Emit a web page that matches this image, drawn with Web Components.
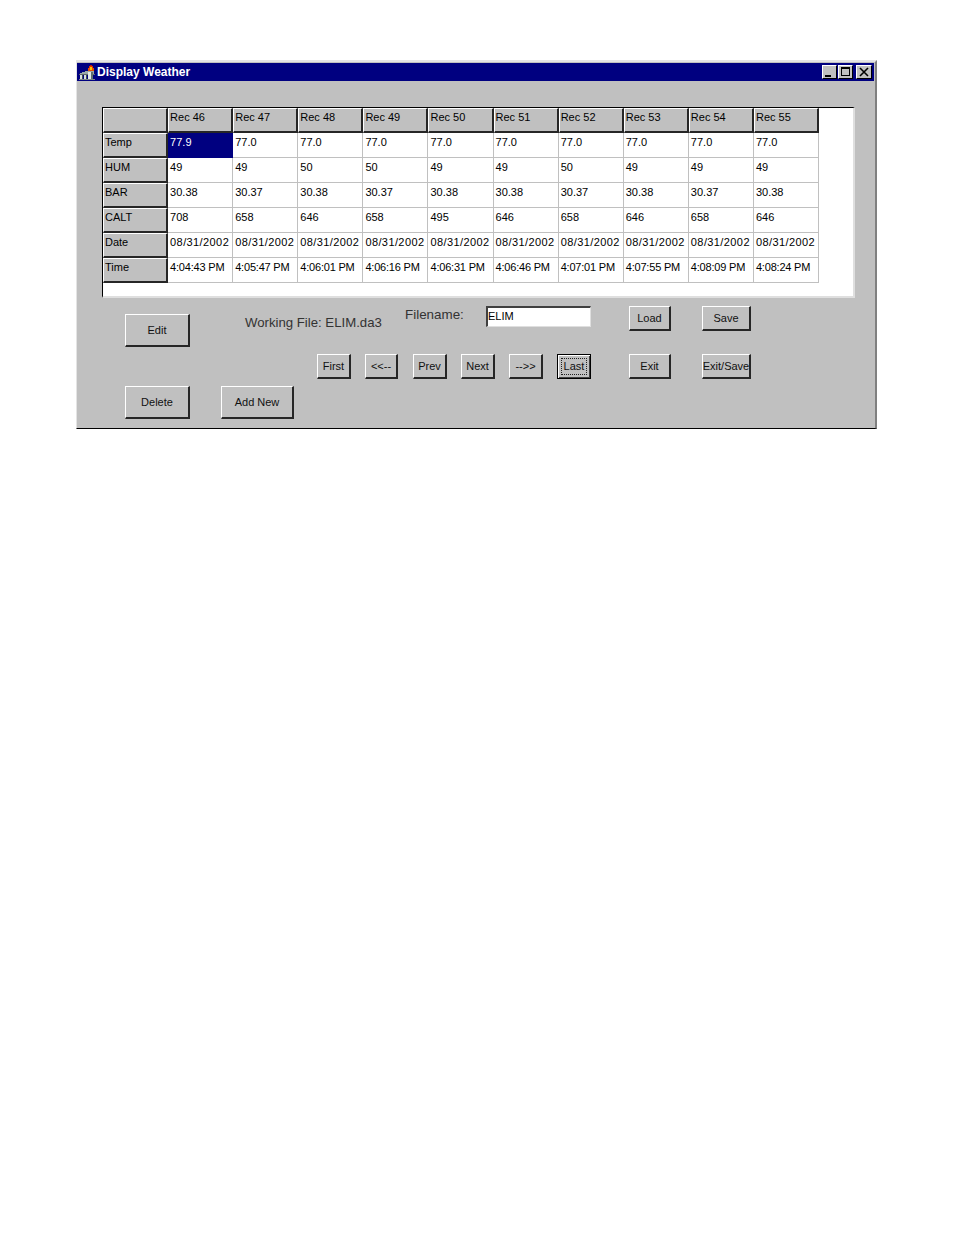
<!DOCTYPE html>
<html>
<head>
<meta charset="utf-8">
<title>Display Weather</title>
<style>
  html, body { margin: 0; background: #fff; }
  body { padding: 60px 0 0 76px; font-family: "Liberation Sans", Arial, sans-serif; }
</style>
</head>
<body>
<weather-window caption="Display Weather">
  <weather-grid></weather-grid>
  <div slot="controls">
    <form-row pad="48">
      <form-button w="65" h="33" top="8">Edit</form-button>
      <form-label left="55" top="9" size="13.2" w="138">Working File: ELIM.da3</form-label>
      <form-label left="22" top="1" size="13.4" w="60">Filename:</form-label>
      <form-input left="21" value="ELIM"></form-input>
      <form-button left="38" w="42" h="25">Load</form-button>
      <form-button left="31" w="49" h="25">Save</form-button>
    </form-row>
    <form-row pad="240" top="7">
      <form-button w="34" h="25">First</form-button>
      <form-button left="14" w="33" h="25">&lt;&lt;--</form-button>
      <form-button left="15" w="34" h="25">Prev</form-button>
      <form-button left="14" w="34" h="25">Next</form-button>
      <form-button left="14" w="34" h="25">--&gt;&gt;</form-button>
      <form-button left="14" w="34" h="25" focused>Last</form-button>
      <form-button left="38" w="42" h="25">Exit</form-button>
      <form-button left="31" w="49" h="25">Exit/Save</form-button>
    </form-row>
    <form-row pad="48" top="7">
      <form-button w="65" h="33">Delete</form-button>
      <form-button left="31" w="73" h="33">Add New</form-button>
    </form-row>
  </div>
</weather-window>
<script>
class WeatherWindow extends HTMLElement {
    constructor() {
        super();
        this.attachShadow({ mode: 'open' });
        this.shadowRoot.innerHTML = `
            <style>
                :host { display: block; width: 801px; height: 369px; box-sizing: border-box; background: #c0c0c0;
                    border-style: solid; border-width: 2px 2px 1px 1px; border-color: #e4e4e4 #808080 #000 #e4e4e4;
                    padding: 1px 0 0 0; }
                #bar { height: 18px; margin-right: 1px; background: #000080; color: #fff; display: flex; align-items: center;
                    font: bold 12px "Liberation Sans", Arial, sans-serif; }
                #icon { margin: 0 2px 0 2px; flex: none; }
                #caption { flex: 1; }
                .btns { display: flex; margin-right: 2px; }
                .b { width: 15px; height: 14px; box-sizing: border-box; background: #c0c0c0; border: 1px solid; border-color: #fff #000 #000 #fff; display: block; flex: none; }
                .b + .b { margin-left: 1px; }
                .b:last-child { margin-left: 3px; width: 16px; }
                #body { padding: 26px 0 0 25px; }
                #controls { padding-top: 8px; }
            </style>
            <div id="bar">
                <svg id="icon" width="16" height="16" viewBox="0 0 16 16" shape-rendering="crispEdges">
                    <rect x="11" y="1" width="2" height="1" fill="#c02000"/>
                    <rect x="10" y="2" width="4" height="2" fill="#e03000"/>
                    <rect x="9" y="4" width="6" height="3" fill="#e85000"/>
                    <rect x="11" y="3" width="2" height="3" fill="#f8c800"/>
                    <rect x="10" y="7" width="4" height="1" fill="#c8a000"/>
                    <polygon points="0,10 7,7 15,7 15,10" fill="#9aa8a8"/>
                    <rect x="0" y="10" width="16" height="1" fill="#606868"/>
                    <rect x="1" y="11" width="2" height="4" fill="#d8e0e0"/>
                    <rect x="3" y="11" width="1" height="4" fill="#405050"/>
                    <rect x="5" y="11" width="2" height="4" fill="#d8e0e0"/>
                    <rect x="7" y="11" width="1" height="4" fill="#405050"/>
                    <rect x="9" y="8" width="3" height="7" fill="#e0e8e8"/>
                    <rect x="12" y="8" width="2" height="7" fill="#607070"/>
                    <rect x="0" y="15" width="16" height="1" fill="#808888"/>
                </svg>
                <span id="caption"></span>
                <div class="btns">
                    <svg class="b" viewBox="0 0 13 12" shape-rendering="crispEdges"><rect x="2" y="9" width="6" height="2" fill="#000"/></svg>
                    <svg class="b" viewBox="0 0 13 12" shape-rendering="crispEdges"><path d="M2 1h9v9H2z M3 3v6h7V3z" fill="#000" fill-rule="evenodd"/></svg>
                    <svg class="b" viewBox="0 0 14 12"><path d="M3 2l8 8M11 2l-8 8" stroke="#000" stroke-width="1.6" fill="none"/></svg>
                </div>
            </div>
            <div id="body"><slot></slot></div>
            <div id="controls"><slot name="controls"></slot></div>
        `;
        this.shadowRoot.querySelector('#caption').textContent = this.getAttribute('caption');
    }
}

class WeatherGrid extends HTMLElement {
    constructor() {
        super();
        this.attachShadow({ mode: 'open' });
        const records = [46, 47, 48, 49, 50, 51, 52, 53, 54, 55];
        const rows = [
            ['Temp', '77.9', '77.0', '77.0', '77.0', '77.0', '77.0', '77.0', '77.0', '77.0', '77.0'],
            ['HUM', '49', '49', '50', '50', '49', '49', '50', '49', '49', '49'],
            ['BAR', '30.38', '30.37', '30.38', '30.37', '30.38', '30.38', '30.37', '30.38', '30.37', '30.38'],
            ['CALT', '708', '658', '646', '658', '495', '646', '658', '646', '658', '646'],
            ['Date', ...records.map(() => '08/31/2002')],
            ['Time', '4:04:43 PM', '4:05:47 PM', '4:06:01 PM', '4:06:16 PM', '4:06:31 PM', '4:06:46 PM', '4:07:01 PM', '4:07:55 PM', '4:08:09 PM', '4:08:24 PM'],
        ];
        let html = '<div class="h"></div>' + records.map(r => `<div class="h">Rec ${r}</div>`).join('');
        rows.forEach((row, j) => {
            row.forEach((text, i) => {
                let cls = i === 0 ? 'h' : (j === 0 && i === 1 ? 'c sel' : 'c');
                if (i > 0 && row[0] === 'Date') cls += ' date';
                if (i > 0 && row[0] === 'Time') cls += ' time';
                html += `<div class="${cls}">${text}</div>`;
            });
        });
        this.shadowRoot.innerHTML = `
            <style>
                :host { display: block; width: 753px; height: 191px; box-sizing: border-box; background: #fff;
                    border-style: solid; border-width: 1px 2px 2px 1px; border-color: #000 #dfdfdf #dfdfdf #000; }
                #grid { display: grid; grid-template-columns: repeat(11, 65.1px); grid-auto-rows: 25px; width: max-content;
                    font: 11px/14px "Liberation Sans", Arial, sans-serif; color: #000; }
                .h, .c { box-sizing: border-box; padding: 2px 0 0 2px; white-space: nowrap; overflow: hidden; }
                .h { background: #c0c0c0; border-style: solid; border-width: 1px 2px 2px 1px; border-color: #fff #262626 #262626 #fff; padding: 1px 0 0 1px; }
                .c { background: #fff; border-right: 1px solid #c0c0c0; border-bottom: 1px solid #c0c0c0; }
                .sel { background: #000080; color: #fff; border-color: #000080; }
                .date { letter-spacing: .4px; }
                .time { letter-spacing: -.2px; }
            </style>
            <div id="grid">${html}</div>
        `;
    }
}

class FormRow extends HTMLElement {
    constructor() {
        super();
        this.attachShadow({ mode: 'open' });
        this.shadowRoot.innerHTML = `
            <style>:host { display: flex; align-items: flex-start; }</style>
            <slot></slot>
        `;
        this.style.paddingLeft = (this.getAttribute('pad') || 0) + 'px';
        this.style.marginTop = (this.getAttribute('top') || 0) + 'px';
    }
}

class FormButton extends HTMLElement {
    constructor() {
        super();
        this.attachShadow({ mode: 'open' });
        this.shadowRoot.innerHTML = `
            <style>
                :host { display: flex; flex: none; box-sizing: border-box; align-items: center; justify-content: center;
                    background: #c0c0c0; color: #111; white-space: nowrap; overflow: hidden;
                    font: 11px "Liberation Sans", Arial, sans-serif;
                    border-style: solid; border-width: 1px 2px 2px 1px; border-color: #fff #262626 #262626 #fff; }
                :host([focused]) { border: 1px solid #000; box-shadow: inset 1px 1px #fff, inset -1px -1px #404040; padding: 3px; align-items: stretch; }
                :host([focused]) span { flex: 1; display: flex; align-items: center; justify-content: center; border: 1px dotted #222; padding-bottom: 2px; box-sizing: border-box; }
            </style>
            <span><slot></slot></span>
        `;
        this.style.width = this.getAttribute('w') + 'px';
        this.style.height = this.getAttribute('h') + 'px';
        this.style.marginLeft = (this.getAttribute('left') || 0) + 'px';
        this.style.marginTop = (this.getAttribute('top') || 0) + 'px';
    }
}

class FormLabel extends HTMLElement {
    constructor() {
        super();
        this.attachShadow({ mode: 'open' });
        this.shadowRoot.innerHTML = `
            <style>
                :host { display: block; flex: none; color: #333; white-space: nowrap; font-family: "Liberation Sans", Arial, sans-serif; line-height: 16px; }
            </style>
            <slot></slot>
        `;
        this.style.fontSize = this.getAttribute('size') + 'px';
        this.style.width = this.getAttribute('w') + 'px';
        this.style.marginLeft = (this.getAttribute('left') || 0) + 'px';
        this.style.marginTop = (this.getAttribute('top') || 0) + 'px';
    }
}

class FormInput extends HTMLElement {
    constructor() {
        super();
        this.attachShadow({ mode: 'open' });
        this.shadowRoot.innerHTML = `
            <style>
                :host { display: block; flex: none; width: 105px; height: 21px; box-sizing: border-box; background: #fff;
                    border-style: solid; border-width: 2px 1px 1px 2px; border-color: #404040 #dfdfdf #dfdfdf #404040;
                    padding-left: 0; font: 11px/16px "Liberation Sans", Arial, sans-serif; color: #000; }
            </style>
            <span id="v"></span>
        `;
        this.shadowRoot.querySelector('#v').textContent = this.getAttribute('value');
        this.style.marginLeft = (this.getAttribute('left') || 0) + 'px';
    }
}

customElements.define('form-button', FormButton);
customElements.define('form-label', FormLabel);
customElements.define('form-input', FormInput);
customElements.define('form-row', FormRow);
customElements.define('weather-grid', WeatherGrid);
customElements.define('weather-window', WeatherWindow);
</script>
</body>
</html>
